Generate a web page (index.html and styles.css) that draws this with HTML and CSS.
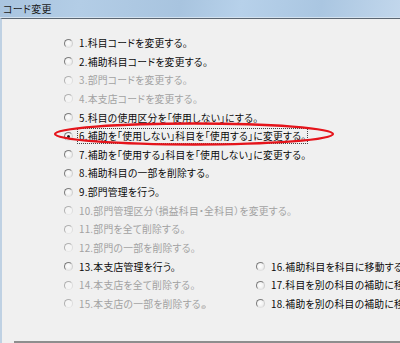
FILE: index.html
```html
<!DOCTYPE html>
<html lang="ja">
<head>
<meta charset="utf-8">
<title>コード変更</title>
<link rel="stylesheet" href="styles.css">
</head>
<body>
<div class="window">
  <div class="titlebar"><span class="title">コード変更</span></div>
  <div class="frame">
    <div class="panel">
      <ul class="options">
        <li class="row"><div class="opt"><span class="radio"></span><span class="label">1.科目コードを変更する。</span></div></li>
        <li class="row"><div class="opt"><span class="radio"></span><span class="label">2.補助科目コードを変更する。</span></div></li>
        <li class="row"><div class="opt disabled"><span class="radio"></span><span class="label">3.部門コードを変更する。</span></div></li>
        <li class="row"><div class="opt disabled"><span class="radio"></span><span class="label">4.本支店コードを変更する。</span></div></li>
        <li class="row"><div class="opt"><span class="radio"></span><span class="label">5.科目の使用区分を「使用しない」にする。</span></div></li>
        <li class="row"><div class="opt checked"><span class="radio"></span><span class="label focus">6.補助を「使用しない」科目を「使用する」に変更する。</span></div></li>
        <li class="row"><div class="opt"><span class="radio"></span><span class="label">7.補助を「使用する」科目を「使用しない」に変更する。</span></div></li>
        <li class="row"><div class="opt"><span class="radio"></span><span class="label">8.補助科目の一部を削除する。</span></div></li>
        <li class="row"><div class="opt"><span class="radio"></span><span class="label">9.部門管理を行う。</span></div></li>
        <li class="row"><div class="opt disabled"><span class="radio"></span><span class="label">10.部門管理区分（損益科目・全科目）を変更する。</span></div></li>
        <li class="row"><div class="opt disabled"><span class="radio"></span><span class="label">11.部門を全て削除する。</span></div></li>
        <li class="row"><div class="opt disabled"><span class="radio"></span><span class="label">12.部門の一部を削除する。</span></div></li>
        <li class="row"><div class="opt col"><span class="radio"></span><span class="label">13.本支店管理を行う。</span></div><div class="opt"><span class="radio"></span><span class="label">16.補助科目を科目に移動する。</span></div></li>
        <li class="row"><div class="opt col disabled"><span class="radio"></span><span class="label">14.本支店を全て削除する。</span></div><div class="opt"><span class="radio"></span><span class="label">17.科目を別の科目の補助に移動する。</span></div></li>
        <li class="row"><div class="opt col disabled"><span class="radio"></span><span class="label">15.本支店の一部を削除する。</span></div><div class="opt"><span class="radio"></span><span class="label">18.補助を別の科目の補助に移動する。</span></div></li>
      </ul>
      <svg class="mark" width="300" height="30" viewBox="0 0 300 30"><ellipse cx="150" cy="15" rx="139" ry="10.5" fill="none" stroke="#e5141b" stroke-width="2.3"/></svg>
      <span class="speck"></span>
    </div>
    <div class="rule"></div>
  </div>
</div>
</body>
</html>
```
FILE: styles.css
```css
html, body {
  margin: 0;
  padding: 0;
}
body {
  width: 400px;
  height: 343px;
  overflow: hidden;
  background: #f0f0f0;
  font-family: "Noto Sans CJK JP", "Noto Sans", sans-serif;
}
.window {
  width: 400px;
  height: 343px;
  display: flex;
  flex-direction: column;
}
.titlebar {
  height: 17px;
  flex: none;
  background: linear-gradient(100deg, #a9c4df 0%, #b3cde6 20%, #a8c4df 45%, #b7d1ea 60%, #aac6e1 80%, #c2d7ec 100%);
  border-bottom: 1px solid #d4e2ef;
  display: flex;
  align-items: center;
  padding-left: 3px;
}
.title {
  font-size: 10px;
  color: #1a1a1a;
  font-feature-settings: "palt";
  letter-spacing: 0.3px;
}
.frame {
  flex: 1;
  display: flex;
  flex-direction: column;
  border-top: 1px solid #5b6672;
  border-left: 2px solid #bfd1e3;
}
.panel {
  position: relative;
  flex: 1;
  overflow: hidden;
}
.rule {
  height: 2px;
  margin-left: 12px;
  background: #8e8e8e;
  flex: none;
}
.options {
  list-style: none;
  margin: 0;
  padding: 14.7px 0 0 62px;
}
.row {
  height: 18.64px;
  display: flex;
  align-items: center;
}
.opt {
  display: flex;
  align-items: center;
  gap: 5px;
  white-space: nowrap;
  color: #0a0a0a;
  font-size: 9.8px;
  font-feature-settings: "palt";
  letter-spacing: 0.25px;
}
.opt.col {
  width: 192px;
  flex: none;
}
.opt.disabled {
  color: #a2a2a2;
}
.radio {
  width: 7px;
  height: 7px;
  border-radius: 50%;
  border: 1px solid;
  border-color: #7d7d7d #cfcfcf #e2e2e2 #7d7d7d;
  background: radial-gradient(circle at 45% 45%, #ffffff 0%, #f2f2f2 50%, #dcdcdc 100%);
  flex: none;
  position: relative;
}
.disabled .radio {
  border-color: #b0b0b0 #dcdcdc #e8e8e8 #b0b0b0;
  background: #f5f5f5;
}
.checked .radio::after {
  content: "";
  position: absolute;
  left: 2px;
  top: 2px;
  width: 3px;
  height: 3px;
  border-radius: 50%;
  background: #1b1b1b;
}
.label {
  line-height: 14px;
  padding: 0 1px;
}
.label.focus {
  outline: 1px dotted #444;
  outline-offset: 0;
}
.mark {
  position: absolute;
  left: 42px;
  top: 100px;
  pointer-events: none;
}
.speck {
  position: absolute;
  left: 200px;
  top: 286px;
  width: 2px;
  height: 2px;
  border: 1px solid #c4c4c4;
  border-radius: 50%;
}
```
